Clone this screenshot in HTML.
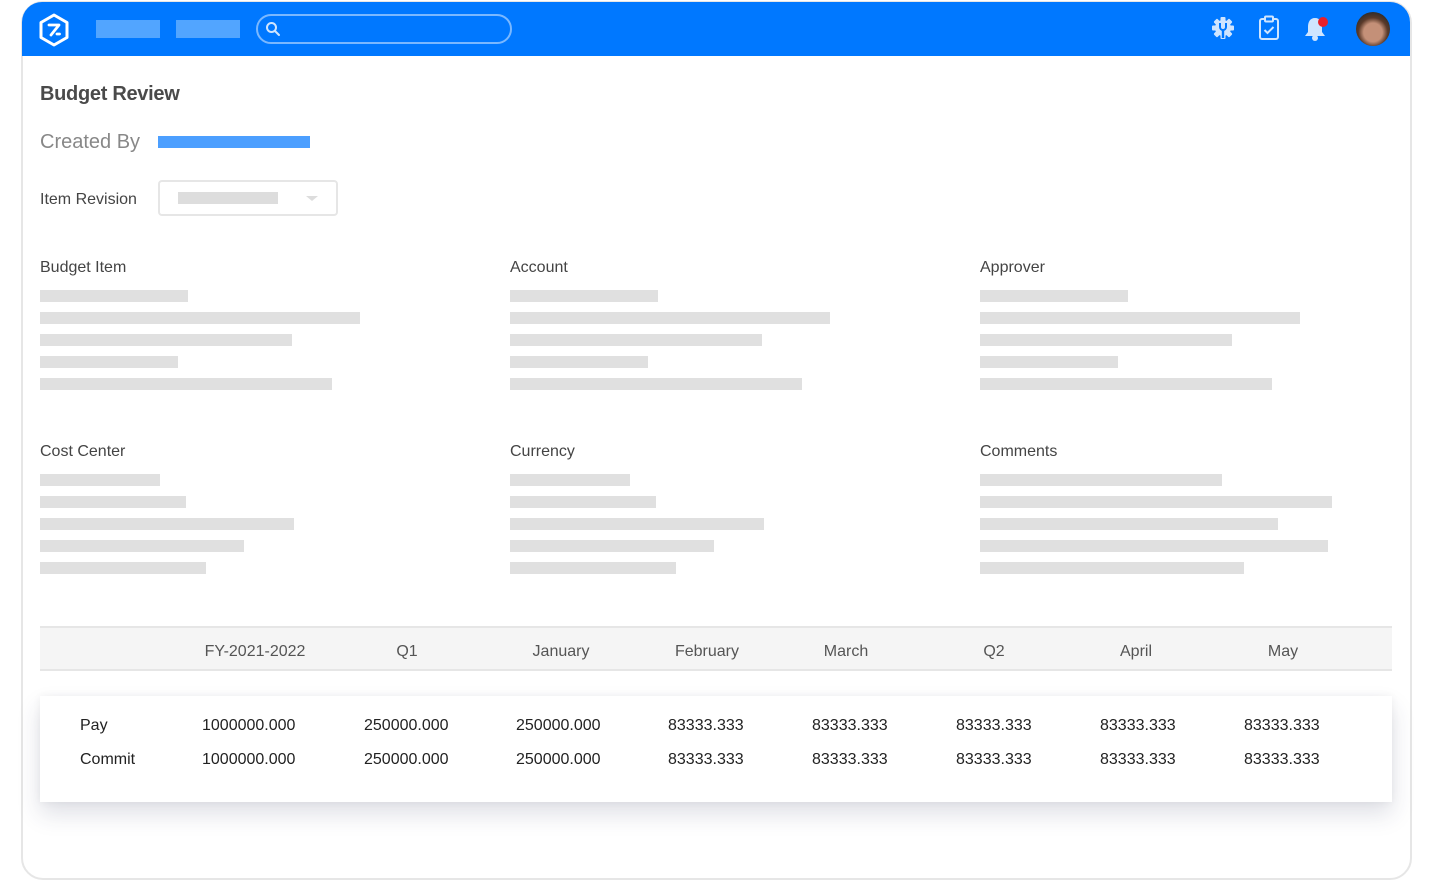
<!DOCTYPE html>
<html><head><style>
*{margin:0;padding:0;box-sizing:border-box}
body{width:1432px;height:880px;background:#fff;font-family:"Liberation Sans",sans-serif;position:relative;overflow:hidden}
.a{position:absolute}
.card{left:21px;top:1px;width:1391px;height:879px;border:2px solid #e6e6e6;border-radius:22px;overflow:hidden}
.hdr{left:22px;top:2px;width:1388px;height:54px;background:#0078ff;border-radius:20px 20px 0 0}
.sk{position:absolute;height:12px;background:#e0e0e0}
.lbl{position:absolute;font-size:16px;color:#444}
.th{position:absolute;top:643px;font-size:16px;color:#555;transform:translateX(-50%)}
.td{position:absolute;font-size:16px;color:#222}
</style></head><body>
<div class="a card"></div>
<div class="a hdr"></div>
<svg class="a" style="left:38px;top:13px" width="32" height="34" viewBox="0 0 32 34"><path d="M16 2 L29 9.5 V24.5 L16 32 L3 24.5 V9.5 Z" fill="none" stroke="#fff" stroke-width="3" stroke-linejoin="round"/><path d="M11 12 H21 L13 22 M19 21 h2.5" fill="none" stroke="#fff" stroke-width="2.8" stroke-linecap="round" stroke-linejoin="round"/></svg>
<div class="a" style="left:96px;top:20px;width:64px;height:18px;background:#52a5ff"></div>
<div class="a" style="left:176px;top:20px;width:64px;height:18px;background:#52a5ff"></div>
<div class="a" style="left:256px;top:14px;width:256px;height:30px;border:2px solid #7ab8ff;border-radius:15px"></div>
<svg class="a" style="left:265px;top:21px" width="16" height="16" viewBox="0 0 16 16"><circle cx="6.5" cy="6.5" r="4.5" fill="none" stroke="#cfe5ff" stroke-width="2"/><path d="M10 10 L14 14" stroke="#cfe5ff" stroke-width="2" stroke-linecap="round"/></svg>
<svg class="a" style="left:1211px;top:16px" width="24" height="24" viewBox="0 0 24 24">
<g fill="#cfe5ff"><circle cx="12" cy="12" r="8"/>
<rect x="9.5" y="1" width="5" height="22" rx="1"/>
<rect x="9.5" y="1" width="5" height="22" rx="1" transform="rotate(45 12 12)"/>
<rect x="9.5" y="1" width="5" height="22" rx="1" transform="rotate(90 12 12)"/>
<rect x="9.5" y="1" width="5" height="22" rx="1" transform="rotate(135 12 12)"/></g>
<path d="M9 7v4a3 3 0 0 0 6 0V7" stroke="#0078ff" stroke-width="2" fill="none"/><path d="M12 14v8" stroke="#0078ff" stroke-width="2.4"/></svg>
<svg class="a" style="left:1258px;top:15px" width="22" height="26" viewBox="0 0 22 26"><rect x="2" y="4" width="18" height="20" rx="2" fill="none" stroke="#cfe5ff" stroke-width="2"/><rect x="7" y="1.5" width="8" height="5" rx="1" fill="#0078ff" stroke="#cfe5ff" stroke-width="2"/><path d="M6.5 15l3 3 6-6" stroke="#cfe5ff" stroke-width="2" fill="none"/></svg>
<svg class="a" style="left:1303px;top:14px" width="28" height="28" viewBox="0 0 28 28"><path d="M12 4c-5 0-7 4-7 9v5l-3 4h20l-3-4v-5c0-5-2-9-7-9z" fill="#cfe5ff"/><circle cx="12" cy="24" r="3" fill="#cfe5ff"/><circle cx="20" cy="8" r="5" fill="#e8202a"/></svg>
<div class="a" style="left:1356px;top:12px;width:34px;height:34px;border-radius:50%;background:radial-gradient(circle at 50% 60%,#c49078 0 35%,#5a3a2a 55%,#2a2a2a 80%)"></div>

<div class="a" style="left:40px;top:83px;font-size:20px;font-weight:bold;color:#4a4a4a;letter-spacing:-0.3px">Budget Review</div>
<div class="a" style="left:40px;top:131px;font-size:20px;color:#888">Created By</div>
<div class="a" style="left:158px;top:136px;width:152px;height:12px;background:#4c9fff"></div>
<div class="lbl" style="left:40px;top:191px">Item Revision</div>
<div class="a" style="left:158px;top:180px;width:180px;height:36px;border:2px solid #e6e6e6;border-radius:4px"></div>
<div class="a" style="left:178px;top:192px;width:100px;height:12px;background:#ddd"></div>
<div class="a" style="left:306px;top:196px;border:6px solid transparent;border-top:5px solid #ddd"></div>

<div class="lbl" style="left:40px;top:259px">Budget Item</div>
<div class="lbl" style="left:510px;top:259px">Account</div>
<div class="lbl" style="left:980px;top:259px">Approver</div>
<div class="lbl" style="left:40px;top:443px">Cost Center</div>
<div class="lbl" style="left:510px;top:443px">Currency</div>
<div class="lbl" style="left:980px;top:443px">Comments</div>

<div class="sk" style="left:40px;top:290px;width:148px"></div><div class="sk" style="left:40px;top:312px;width:320px"></div><div class="sk" style="left:40px;top:334px;width:252px"></div><div class="sk" style="left:40px;top:356px;width:138px"></div><div class="sk" style="left:40px;top:378px;width:292px"></div>
<div class="sk" style="left:510px;top:290px;width:148px"></div><div class="sk" style="left:510px;top:312px;width:320px"></div><div class="sk" style="left:510px;top:334px;width:252px"></div><div class="sk" style="left:510px;top:356px;width:138px"></div><div class="sk" style="left:510px;top:378px;width:292px"></div>
<div class="sk" style="left:980px;top:290px;width:148px"></div><div class="sk" style="left:980px;top:312px;width:320px"></div><div class="sk" style="left:980px;top:334px;width:252px"></div><div class="sk" style="left:980px;top:356px;width:138px"></div><div class="sk" style="left:980px;top:378px;width:292px"></div>
<div class="sk" style="left:40px;top:474px;width:120px"></div><div class="sk" style="left:40px;top:496px;width:146px"></div><div class="sk" style="left:40px;top:518px;width:254px"></div><div class="sk" style="left:40px;top:540px;width:204px"></div><div class="sk" style="left:40px;top:562px;width:166px"></div>
<div class="sk" style="left:510px;top:474px;width:120px"></div><div class="sk" style="left:510px;top:496px;width:146px"></div><div class="sk" style="left:510px;top:518px;width:254px"></div><div class="sk" style="left:510px;top:540px;width:204px"></div><div class="sk" style="left:510px;top:562px;width:166px"></div>
<div class="sk" style="left:980px;top:474px;width:242px"></div><div class="sk" style="left:980px;top:496px;width:352px"></div><div class="sk" style="left:980px;top:518px;width:298px"></div><div class="sk" style="left:980px;top:540px;width:348px"></div><div class="sk" style="left:980px;top:562px;width:264px"></div>

<div class="a" style="left:40px;top:626px;width:1352px;height:45px;background:#f5f5f5;border-top:2px solid #e6e6e6;border-bottom:2px solid #e6e6e6"></div>
<div class="th" style="left:255px">FY-2021-2022</div><div class="th" style="left:407px">Q1</div><div class="th" style="left:561px">January</div><div class="th" style="left:707px">February</div><div class="th" style="left:846px">March</div><div class="th" style="left:994px">Q2</div><div class="th" style="left:1136px">April</div><div class="th" style="left:1283px">May</div>

<div class="a" style="left:40px;top:696px;width:1352px;height:106px;background:#fff;box-shadow:0 12px 22px rgba(40,50,90,0.15),0 0 8px rgba(0,0,0,0.05)"></div>
<div class="td" style="left:80px;top:717px">Pay</div><div class="td" style="left:80px;top:751px">Commit</div>
<div class="td" style="left:202px;top:717px">1000000.000</div><div class="td" style="left:202px;top:751px">1000000.000</div>
<div class="td" style="left:364px;top:717px">250000.000</div><div class="td" style="left:364px;top:751px">250000.000</div>
<div class="td" style="left:516px;top:717px">250000.000</div><div class="td" style="left:516px;top:751px">250000.000</div>
<div class="td" style="left:668px;top:717px">83333.333</div><div class="td" style="left:668px;top:751px">83333.333</div>
<div class="td" style="left:812px;top:717px">83333.333</div><div class="td" style="left:812px;top:751px">83333.333</div>
<div class="td" style="left:956px;top:717px">83333.333</div><div class="td" style="left:956px;top:751px">83333.333</div>
<div class="td" style="left:1100px;top:717px">83333.333</div><div class="td" style="left:1100px;top:751px">83333.333</div>
<div class="td" style="left:1244px;top:717px">83333.333</div><div class="td" style="left:1244px;top:751px">83333.333</div>
</body></html>
